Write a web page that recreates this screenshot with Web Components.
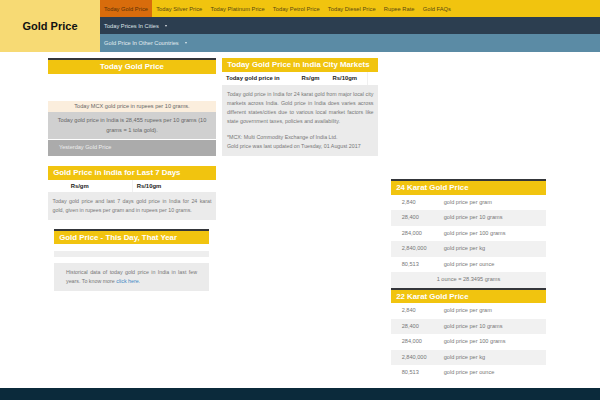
<!DOCTYPE html>
<html><head><meta charset="utf-8"><style>
html,body{margin:0;padding:0;background:#fff;overflow:hidden}
body{font-family:"Liberation Sans",Arial,sans-serif;width:600px;height:400px}
</style></head><body>
<gp-page>
<gp-header slot="header"></gp-header>
<div slot="left">
<gp-card heading="Today Gold Price" center dark>
  <div style="height:27.5px;background:#fff"></div>
  <div style="height:11px;line-height:11px;background:#fbeedd;text-align:center;font-size:5.6px;color:#666">Today MCX gold price in rupees per 10 grams.</div>
  <div style="height:27px;box-sizing:border-box;padding:3px 8px 0;background:#d0d0d0;text-align:center;font-size:5.65px;line-height:10px;color:#666">Today gold price in India is 28,455 rupees per 10 grams (10 grams = 1 tola gold).</div>
  <div style="height:15.5px;margin-top:1px;line-height:15px;padding-left:11px;background:#ababab;font-size:5.6px;color:#eee">Yesterday Gold Price</div>
</gp-card>
<gp-card heading="Gold Price in India for Last 7 Days" style="margin-top:10px">
  <gp-thead cols="18.7px 66px 1fr" gap="4" a="" b="Rs/gm" c="Rs/10gm" h="12"></gp-thead>
  <gp-note style="padding:5px 4.5px">Today gold price and last 7 days gold price in India for 24 karat gold, given in rupees per gram and in rupees per 10 grams.</gp-note>
</gp-card>
<div style="margin:9px 7px 0 6px">
<gp-card heading="Gold Price - This Day, That Year" dark>
  <div style="height:6.5px"></div>
  <div style="height:6px;background:#eee"></div>
  <div style="height:6.5px"></div>
  <gp-note style="padding:5px 12px"><span style="display:block;text-align-last:justify">Historical data of today gold price in India in last few</span><span style="display:block">years. To know more <a href="#" style="color:#3b87c4;text-decoration:none">click here.</a></span></gp-note>
</gp-card>
</div>
</div>
<div slot="mid">
<gp-card heading="Today Gold Price in India City Markets">
  <gp-thead cols="75.5px 31px 35px" gap="0" a="Today gold price in" b="Rs/gm" c="Rs/10gm" h="12.5"></gp-thead>
  <gp-note style="padding:5px 4.5px 5px 5px">Today gold price in India for 24 karat gold from major local city markets across India. Gold price in India does varies across different states/cities due to various local market factors like state government taxes, policies and availability.<span style="display:block;height:7px"></span><span style="display:block;text-align:left">*MCX: Multi Commodity Exchange of India Ltd.<br>Gold price was last updated on Tuesday, 01 August 2017</span></gp-note>
</gp-card>
</div>
<div slot="right">
<gp-card heading="24 Karat Gold Price" dark>
  <gp-row a="2,840" b="gold price per gram"></gp-row>
  <gp-row alt a="28,400" b="gold price per 10 grams"></gp-row>
  <gp-row a="284,000" b="gold price per 100 grams"></gp-row>
  <gp-row alt a="2,840,000" b="gold price per kg"></gp-row>
  <gp-row a="80,513" b="gold price per ounce"></gp-row>
  <div style="height:15.5px;line-height:15px;background:#f1f1f1;text-align:center;font-size:5.6px;color:#777">1 ounce = 28.3495 grams</div>
</gp-card>
<gp-card heading="22 Karat Gold Price" dark>
  <gp-row a="2,840" b="gold price per gram"></gp-row>
  <gp-row alt a="28,400" b="gold price per 10 grams"></gp-row>
  <gp-row a="284,000" b="gold price per 100 grams"></gp-row>
  <gp-row alt a="2,840,000" b="gold price per kg"></gp-row>
  <gp-row a="80,513" b="gold price per ounce"></gp-row>
</gp-card>
</div>
</gp-page>
<script>
function def(name,html){customElements.define(name,class extends HTMLElement{connectedCallback(){if(this.shadowRoot)return;const r=this.attachShadow({mode:'open'});r.innerHTML=typeof html==='function'?html(this):html;}});}
def('gp-page',`<style>
:host{display:flex;flex-direction:column;width:600px;height:400px;overflow:hidden}
.main{flex:1;display:grid;grid-template-columns:168px 156px 162px;column-gap:6px;padding:6px 0 0 48px;align-items:start}
.right-wrap{margin-left:7px;margin-top:121px}
footer{height:12px;background:#0b2a3b;flex:none}
</style><slot name="header"></slot><div class="main"><slot name="left"></slot><slot name="mid"></slot><div class="right-wrap"><slot name="right"></slot></div></div><footer></footer>`);
def('gp-header',`<style>
:host{display:flex;height:52px;flex:none}
.logo{width:100px;background:#f7da74;display:flex;align-items:center;justify-content:center;font:bold 11px "Liberation Sans",Arial,sans-serif;color:#111}
nav{flex:1;display:flex;flex-direction:column;font-size:5.7px}
.row{display:flex;align-items:center}
.y{height:17px;background:#f1c40f;color:#5b4a12;font-size:5.78px}
.d{height:17px;background:#2c3e50;color:#dfe4e8}
.b{height:18px;background:#5b8ba5;color:#e2ebf0}
a{display:flex;align-items:center;height:100%;padding:0 4.1px;white-space:nowrap}
a.on{background:#d86c0c;color:#5a3208}
i{display:block;margin-left:6px;border-left:1.5px solid transparent;border-right:1.5px solid transparent;border-top:2px solid currentColor}
</style><div class="logo">Gold Price</div><nav>
<div class="row y"><a class="on">Today Gold Price</a><a>Today Silver Price</a><a>Today Platinum Price</a><a>Today Petrol Price</a><a>Today Diesel Price</a><a>Rupee Rate</a><a>Gold FAQs</a></div>
<div class="row d"><a>Today Prices In Cities<i></i></a></div>
<div class="row b"><a>Gold Price In Other Countries<i></i></a></div>
</nav>`);
def('gp-card',h=>`<style>
:host{display:block}
.t{background:#f1c40f;color:#fff;font-weight:bold;font-size:7.85px;height:14px;line-height:14px;padding:0 5.2px;white-space:nowrap;${h.hasAttribute('center')?'text-align:center;':''}${h.hasAttribute('dark')?'border-top:2.5px solid #34363a;height:13.5px;line-height:13.5px;':''}}
</style><div class="t">${h.getAttribute('heading')}</div><slot></slot>`);
def('gp-thead',h=>`<style>
:host{display:block}
.g{display:grid;grid-template-columns:${h.getAttribute('cols')};height:${h.getAttribute('h')}px;line-height:${h.getAttribute('h')}px;font-size:5.9px;font-weight:bold;color:#222;background:#fff;padding-left:4px}
span:nth-child(2){border-right:1px solid ${+h.getAttribute('gap')?'#f0f0f0':'transparent'};margin-right:${h.getAttribute('gap')}px}
span:nth-child(3){border-right:1px solid ${+h.getAttribute('gap')?'transparent':'#f0f0f0'}}
</style><div class="g"><span>${h.getAttribute('a')}</span><span>${h.getAttribute('b')}</span><span>${h.getAttribute('c')}</span></div>`);
def('gp-note',`<style>
:host{display:block;background:#ebebeb;color:#777;font-size:5.3px;line-height:9px;text-align:justify}
</style><slot></slot>`);
def('gp-row',h=>`<style>
:host{display:grid;grid-template-columns:42px 1fr;height:15.5px;line-height:15.5px;padding-left:10.7px;font-size:5.6px;color:#777;background:${h.hasAttribute('alt')?'#f1f1f1':'#fff'}}
</style><span>${h.getAttribute('a')}</span><span>${h.getAttribute('b')}</span>`);
</script>
</body></html>
